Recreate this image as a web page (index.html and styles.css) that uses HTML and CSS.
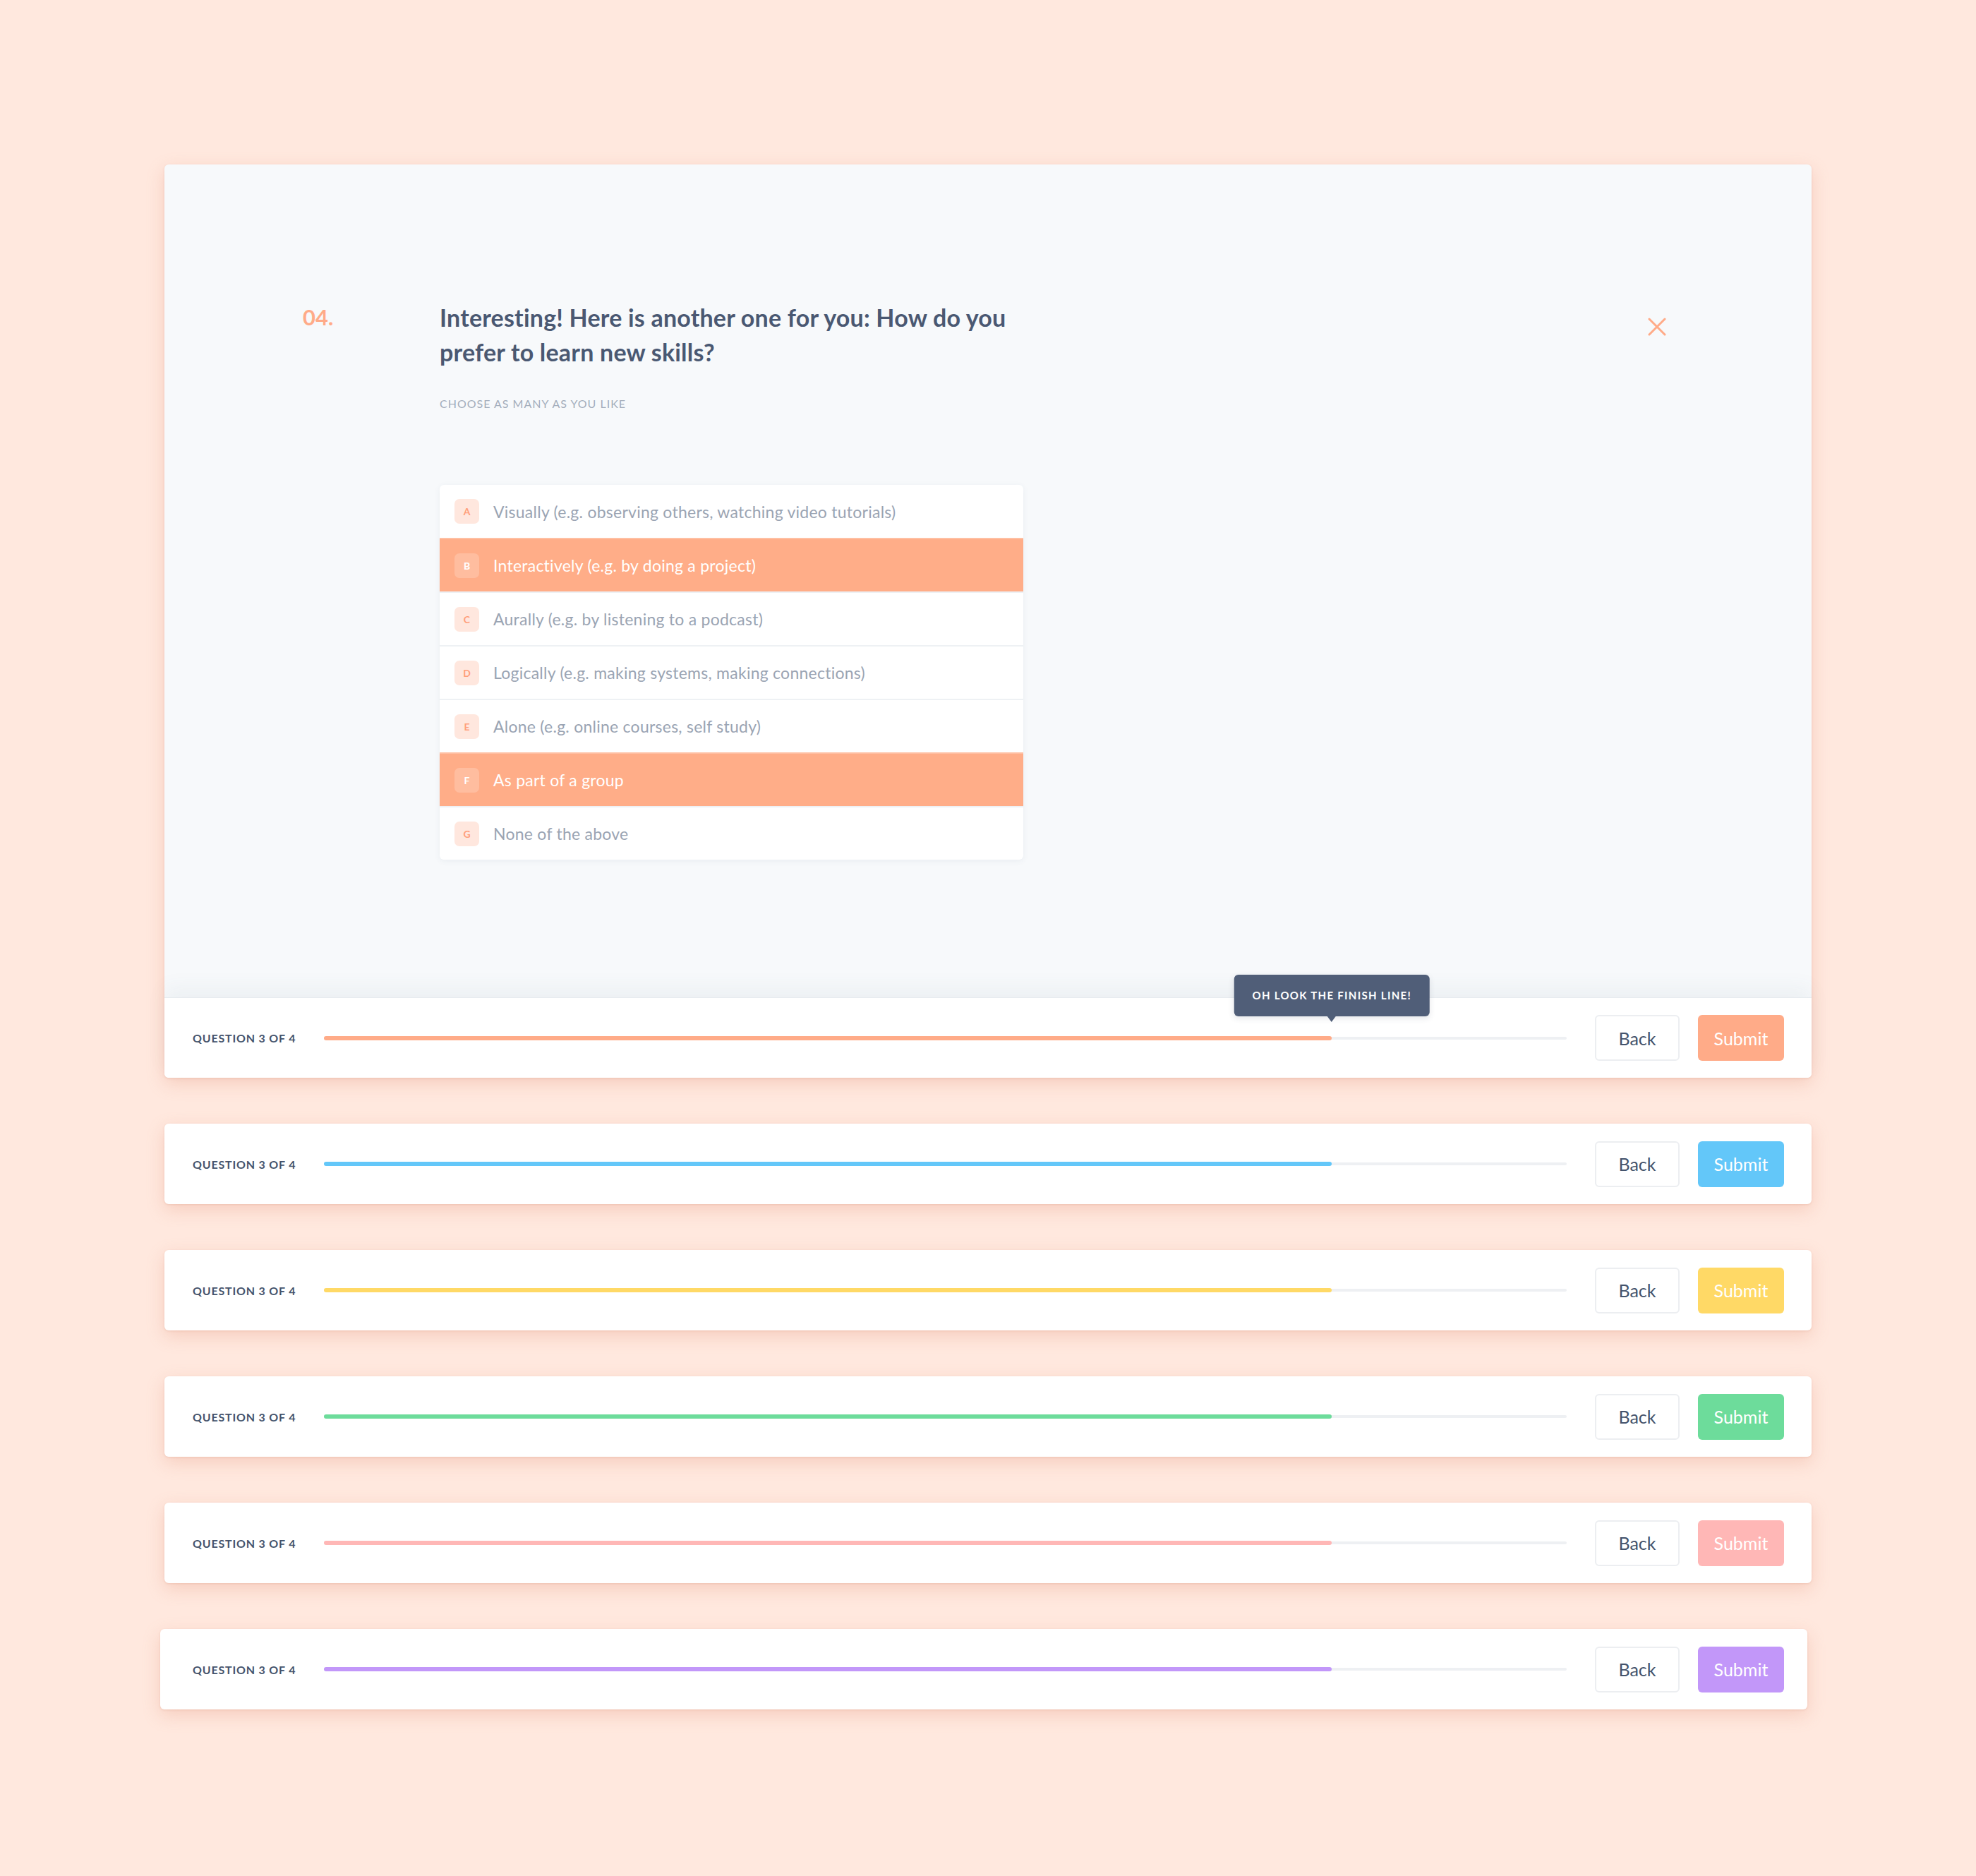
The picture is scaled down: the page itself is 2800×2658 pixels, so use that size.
FILE: index.html
```html
<!DOCTYPE html>
<html lang="en">
<head>
<meta charset="utf-8">
<title>Quiz</title>
<link rel="stylesheet" href="styles.css">
</head>
<body>
<main class="page">
  <section class="card quiz">
    <div class="quiz-body">
      <div class="q-num">04.</div>
      <div class="q-main">
        <h1 class="q-title">Interesting! Here is another one for you: How do you prefer to learn new skills?</h1>
        <p class="q-hint">CHOOSE AS MANY AS YOU LIKE</p>
        <ul class="options">
          <li class="option"><span class="badge">A</span><span class="opt-text">Visually (e.g. observing others, watching video tutorials)</span></li>
          <li class="option is-selected"><span class="badge">B</span><span class="opt-text">Interactively (e.g. by doing a project)</span></li>
          <li class="option"><span class="badge">C</span><span class="opt-text">Aurally (e.g. by listening to a podcast)</span></li>
          <li class="option"><span class="badge">D</span><span class="opt-text">Logically (e.g. making systems, making connections)</span></li>
          <li class="option"><span class="badge">E</span><span class="opt-text">Alone (e.g. online courses, self study)</span></li>
          <li class="option is-selected"><span class="badge">F</span><span class="opt-text">As part of a group</span></li>
          <li class="option"><span class="badge">G</span><span class="opt-text">None of the above</span></li>
        </ul>
      </div>
      <button class="close" aria-label="Close">
        <svg width="26" height="26" viewBox="0 0 26 26"><path d="M2 2 L24 24 M24 2 L2 24" fill="none" stroke="currentColor" stroke-width="3" stroke-linecap="round"/></svg>
      </button>
    </div>
    <div class="footer footer-attached theme-peach">
      <span class="progress-label">QUESTION 3 OF 4</span>
      <div class="track">
        <div class="fill" style="width:81.1%">
          <div class="tooltip">OH LOOK THE FINISH LINE!</div>
        </div>
      </div>
      <button class="btn btn-back">Back</button>
      <button class="btn btn-submit">Submit</button>
    </div>
  </section>

  <div class="card footer theme-blue">
    <span class="progress-label">QUESTION 3 OF 4</span>
    <div class="track"><div class="fill" style="width:81.1%"></div></div>
    <button class="btn btn-back">Back</button>
    <button class="btn btn-submit">Submit</button>
  </div>

  <div class="card footer theme-yellow">
    <span class="progress-label">QUESTION 3 OF 4</span>
    <div class="track"><div class="fill" style="width:81.1%"></div></div>
    <button class="btn btn-back">Back</button>
    <button class="btn btn-submit">Submit</button>
  </div>

  <div class="card footer theme-green">
    <span class="progress-label">QUESTION 3 OF 4</span>
    <div class="track"><div class="fill" style="width:81.1%"></div></div>
    <button class="btn btn-back">Back</button>
    <button class="btn btn-submit">Submit</button>
  </div>

  <div class="card footer theme-pink">
    <span class="progress-label">QUESTION 3 OF 4</span>
    <div class="track"><div class="fill" style="width:81.1%"></div></div>
    <button class="btn btn-back">Back</button>
    <button class="btn btn-submit">Submit</button>
  </div>

  <div class="card footer footer-shifted theme-purple">
    <span class="progress-label">QUESTION 3 OF 4</span>
    <div class="track"><div class="fill" style="width:81.1%"></div></div>
    <button class="btn btn-back">Back</button>
    <button class="btn btn-submit">Submit</button>
  </div>
</main>
</body>
</html>
```

FILE: styles.css
```css
* { box-sizing: border-box; }

html, body {
  margin: 0;
  padding: 0;
}

body {
  background: #ffe8de;
  font-family: Lato, "Noto Sans", "Liberation Sans", sans-serif;
  color: #4a5872;
  min-height: 2658px;
}

.page {
  width: 2334px;
  margin: 0 auto;
  padding: 233px 0 200px;
  display: flex;
  flex-direction: column;
  gap: 65px;
}

.card {
  border-radius: 6px;
  box-shadow: 0 8px 24px rgba(226, 150, 124, 0.32), 0 1px 3px rgba(210, 140, 115, 0.25);
}

/* ---------- question card ---------- */
.quiz {
  background: #f7f9fb;
  overflow: visible;
}

.quiz-body {
  height: 1180px;
  display: flex;
  align-items: flex-start;
  padding: 192px 206px 0 196px;
}

.q-num {
  flex: none;
  width: 194px;
  font-size: 31px;
  line-height: 49px;
  font-weight: 700;
  color: #ffab88;
}

.q-main {
  flex: 1;
}

.q-title {
  margin: 0;
  max-width: 830px;
  font-size: 34px;
  line-height: 49px;
  letter-spacing: 0.2px;
  font-weight: 700;
  color: #4a5872;
}

.q-hint {
  margin: 39px 0 0;
  font-size: 16px;
  line-height: 20px;
  letter-spacing: 1px;
  color: #a3adbb;
}

.options {
  margin: 105px 0 0;
  padding: 0;
  list-style: none;
  width: 827px;
  background: #fff;
  border-radius: 6px;
  box-shadow: 0 2px 8px rgba(60, 80, 110, 0.07);
  overflow: hidden;
}

.option {
  height: 76px;
  display: flex;
  align-items: center;
  gap: 20px;
  padding-left: 21px;
  border-top: 2px solid #eef1f4;
  font-size: 23px;
  letter-spacing: 0.25px;
  color: #9aa4b3;
}

.option:first-child {
  border-top: none;
  height: 75px;
}

.option.is-selected {
  background: #ffad88;
  border-top-color: #ffbfa2;
  color: #fff;
}

.badge {
  flex: none;
  width: 35px;
  height: 35px;
  border-radius: 7px;
  background: #ffe7de;
  color: #ff9f7b;
  font-size: 14px;
  font-weight: 700;
  letter-spacing: 0;
  display: flex;
  align-items: center;
  justify-content: center;
}

.is-selected .badge {
  background: rgba(255, 255, 255, 0.2);
  color: #fff;
}

.close {
  flex: none;
  margin-top: 25px;
  width: 26px;
  height: 26px;
  padding: 0;
  border: none;
  background: none;
  color: #ffab88;
  display: block;
}

.close svg { display: block; }

/* ---------- progress footer ---------- */
.footer {
  height: 114px;
  display: flex;
  align-items: center;
  padding: 0 39px 0 40px;
  background: #fff;
  position: relative;
}

.footer-attached {
  border-top: 1px solid #e6ebef;
  border-radius: 0 0 6px 6px;
  box-shadow: 0 -14px 28px rgba(70, 95, 125, 0.06);
}

.footer-shifted {
  margin-left: -6px;
  margin-right: 6px;
  padding-left: 46px;
  padding-right: 33px;
}

.progress-label {
  flex: none;
  margin-right: 40px;
  font-size: 16px;
  font-weight: 700;
  letter-spacing: 0.8px;
  color: #44536c;
}

.track {
  flex: 1;
  height: 6px;
  position: relative;
  display: flex;
  align-items: center;
  margin-right: 40px;
}

.track::before {
  content: "";
  position: absolute;
  left: 0;
  right: 0;
  height: 4px;
  border-radius: 2px;
  background: #eef0f3;
}

.fill {
  position: relative;
  height: 6px;
  border-radius: 3px;
  background: var(--accent);
}

.tooltip {
  position: absolute;
  right: 0;
  bottom: calc(100% + 28px);
  transform: translateX(50%);
  height: 59px;
  padding: 0 26px;
  line-height: 59px;
  white-space: nowrap;
  background: #505e78;
  color: #fff;
  font-size: 15px;
  font-weight: 700;
  letter-spacing: 1.3px;
  border-radius: 6px;
  box-shadow: 0 3px 8px rgba(50, 60, 80, 0.12);
}

.tooltip::after {
  content: "";
  position: absolute;
  left: 50%;
  top: 100%;
  margin-left: -6px;
  border-left: 6px solid transparent;
  border-right: 6px solid transparent;
  border-top: 8px solid #505e78;
}

.btn {
  flex: none;
  height: 65px;
  border-radius: 6px;
  font-family: Lato, "Noto Sans", "Liberation Sans", sans-serif;
  font-size: 25px;
  padding: 0;
}

.btn-back {
  width: 120px;
  background: #fff;
  border: 2px solid #eceef1;
  color: #44536c;
  margin-right: 26px;
}

.btn-submit {
  width: 122px;
  border: none;
  background: var(--accent);
  color: #fff;
}

.theme-peach  { --accent: #ffab88; }
.theme-blue   { --accent: #63c7f9; }
.theme-yellow { --accent: #ffd966; }
.theme-green  { --accent: #6ddc9b; }
.theme-pink   { --accent: #ffb7b6; }
.theme-purple { --accent: #c297f9; }
```
